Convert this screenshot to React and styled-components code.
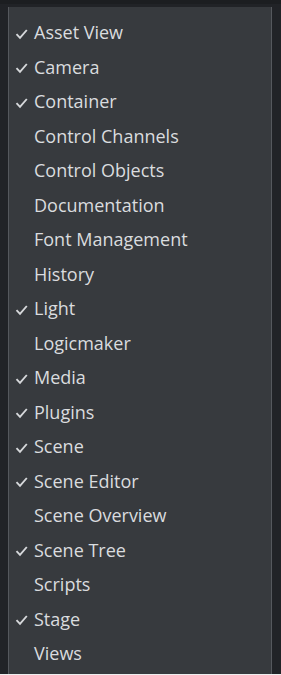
import React from 'react'
import styled, { createGlobalStyle } from 'styled-components'

const GlobalStyle = createGlobalStyle`
  html, body {
    margin: 0;
    padding: 0;
    background: #212327;
  }
  body {
    font-family: "Open Sans", "Noto Sans", sans-serif;
  }
`

const Frame = styled.div`
  width: 281px;
  height: 675px;
  box-sizing: border-box;
  background: #212327;
  border-top: 4px solid #1c1e21;
  border-bottom: 1px solid #eeeeee;
  padding-top: 3px;
  padding-left: 8px;
  padding-right: 9px;
  display: flex;
  flex-direction: column;
`

const Menu = styled.ul`
  list-style: none;
  margin: 0;
  padding: 8px 0 3px;
  flex: 1;
  background: #373a3e;
  border-left: 1px solid #55585d;
  border-right: 1px solid #55585d;
  display: flex;
  flex-direction: column;
`

const Item = styled.li`
  height: 34.5px;
  display: flex;
  align-items: center;
  color: #dadcdf;
  font-size: 18px;
  letter-spacing: 0;
`

const Check = styled.span`
  width: 25px;
  display: flex;
  justify-content: flex-start;
  padding-left: 6px;
  box-sizing: border-box;
  margin-top: 3px;
  visibility: ${p => (p.$on ? 'visible' : 'hidden')};
  svg {
    width: 13px;
    height: 12px;
  }
`

const items = [
  ['Asset View', true],
  ['Camera', true],
  ['Container', true],
  ['Control Channels', false],
  ['Control Objects', false],
  ['Documentation', false],
  ['Font Management', false],
  ['History', false],
  ['Light', true],
  ['Logicmaker', false],
  ['Media', true],
  ['Plugins', true],
  ['Scene', true],
  ['Scene Editor', true],
  ['Scene Overview', false],
  ['Scene Tree', true],
  ['Scripts', false],
  ['Stage', true],
  ['Views', false],
]

const Tick = () => (
  <svg viewBox="0 0 13 12" fill="none">
    <path d="M1.5 6.2 L5 9.8 L11.8 2" stroke="#d6d8db" strokeWidth="1.9" />
  </svg>
)

export default function App() {
  return (
    <>
      <GlobalStyle />
      <Frame>
        <Menu>
          {items.map(([label, on]) => (
            <Item key={label}>
              <Check $on={on}><Tick /></Check>
              {label}
            </Item>
          ))}
        </Menu>
      </Frame>
    </>
  )
}
